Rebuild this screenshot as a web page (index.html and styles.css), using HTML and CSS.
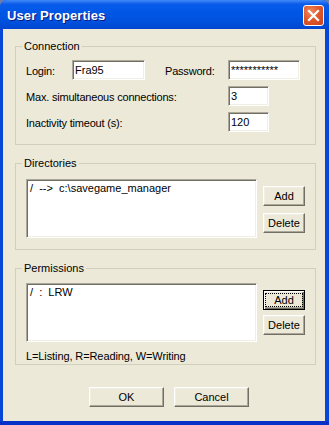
FILE: index.html
```html
<!DOCTYPE html>
<html>
<head>
    <title>User Properties</title>
    <link rel="stylesheet" href="styles.css">
</head>
<body>
    <div class="window">
        <div class="titlebar">
            <span class="title">User Properties</span>
            <button class="close" title="Close">
                <svg width="13" height="13" viewBox="0 0 13 13">
                    <path d="M2 2 L11 11 M11 2 L2 11" stroke="#fff" stroke-width="2.2" stroke-linecap="square"/>
                </svg>
            </button>
        </div>

        <div class="client">
            <fieldset class="group conn">
                <legend>Connection</legend>
                <div class="row">
                    <label class="lbl lbl-login">Login:</label>
                    <input class="edit edit-login" type="text" value="Fra95">
                    <label class="lbl lbl-pass">Password:</label>
                    <input class="edit edit-pass" type="text" value="***********">
                </div>
                <div class="row">
                    <label class="lbl lbl-wide">Max. simultaneous connections:</label>
                    <input class="edit edit-num" type="text" value="3">
                </div>
                <div class="row">
                    <label class="lbl lbl-wide">Inactivity timeout (s):</label>
                    <input class="edit edit-num" type="text" value="120">
                </div>
            </fieldset>

            <fieldset class="group dirs">
                <legend>Directories</legend>
                <div class="listrow">
                    <div class="listbox">
                        <div class="item">/&nbsp; --&gt;&nbsp; c:\savegame_manager</div>
                    </div>
                    <div class="side">
                        <button class="btn">Add</button>
                        <button class="btn">Delete</button>
                    </div>
                </div>
            </fieldset>

            <fieldset class="group perms">
                <legend>Permissions</legend>
                <div class="listrow">
                    <div class="listbox">
                        <div class="item">/&nbsp; :&nbsp; LRW</div>
                    </div>
                    <div class="side">
                        <button class="btn default"><span class="focus">Add</span></button>
                        <button class="btn">Delete</button>
                    </div>
                </div>
                <div class="hint">L=Listing, R=Reading, W=Writing</div>
            </fieldset>

            <div class="footer">
                <button class="btn big">OK</button>
                <button class="btn big">Cancel</button>
            </div>
        </div>
    </div>
</body>
</html>
```

FILE: styles.css
```css
html, body {
    margin: 0;
    padding: 0;
}

body {
    background: #6d7fa8;
    font-family: "Liberation Sans", Arial, sans-serif;
    font-size: 11px;
    color: #000;
}

.window {
    width: 329px;
    height: 425px;
    background: #0846d8;
    border-radius: 7px 7px 0 0;
    display: flex;
    flex-direction: column;
    box-sizing: border-box;
    border-bottom: 4px solid #0831c8;
}

.titlebar {
    height: 29px;
    flex: none;
    display: flex;
    align-items: center;
    justify-content: space-between;
    padding: 0 5px 0 7px;
    border-radius: 7px 7px 0 0;
    background: linear-gradient(to bottom, #3d8cf6 0, #2a73f2 2px, #0a5ceb 4px, #0057e6 40%, #0051dd 75%, #0445d0 100%);
}

.title {
    color: #fff;
    font-weight: bold;
    font-size: 13px;
    letter-spacing: 0.1px;
    text-shadow: 1px 1px 0 #0a1a80;
    margin-top: 1px;
}

.close {
    width: 21px;
    height: 21px;
    padding: 0;
    margin-top: 1px;
    border: 1px solid #fff;
    border-radius: 3px;
    background: radial-gradient(circle at 35% 30%, #f08a60 0, #e05a2c 45%, #c8401c 100%);
    display: flex;
    align-items: center;
    justify-content: center;
}

.client {
    flex: 1;
    margin: 0 4px 0 3px;
    background: #ece9d8;
    padding: 11px 9px 0 12px;
}

.group {
    margin: 0 0 12px 0;
    padding: 7px 10px 12px 10px;
    border: 1px solid #d0d0bf;
    border-radius: 0;
    min-width: 0;
}

.group legend {
    padding: 0 2px;
    margin-left: -4px;
    line-height: 13px;
}

.row {
    display: flex;
    align-items: flex-start;
    height: 20px;
    margin-bottom: 6px;
}

.row:last-child {
    margin-bottom: 0;
}

.lbl {
    padding-top: 5px;
    line-height: 13px;
    letter-spacing: -0.2px;
    flex: none;
}

.lbl-login {
    width: 46px;
}

.lbl-pass {
    width: 63px;
    margin-left: 20px;
}

.lbl-wide {
    width: 202px;
}

.edit {
    box-sizing: border-box;
    height: 20px;
    padding: 0 2px;
    margin: 0;
    font-family: inherit;
    font-size: 11px;
    color: #000;
    background: #fff;
    border: 1px solid;
    border-color: #aca899 #fff #fff #aca899;
    box-shadow: inset 1px 1px 0 #716f64, inset -1px -1px 0 #f1efe2;
    outline: none;
}

.edit-login {
    width: 73px;
}

.edit-pass {
    width: 72px;
}

.edit-num {
    width: 41px;
}

.listrow {
    display: flex;
    align-items: flex-start;
    padding-top: 2px;
}

.listbox {
    box-sizing: border-box;
    width: 234px;
    height: 59px;
    background: #fff;
    border: 1px solid;
    border-color: #aca899 #fff #fff #aca899;
    box-shadow: inset 1px 1px 0 #716f64, inset -1px -1px 0 #f1efe2;
    padding: 2px 3px;
}

.item {
    line-height: 13px;
}

.side {
    display: flex;
    flex-direction: column;
    gap: 7px;
    margin-left: 6px;
    padding-top: 7px;
}

.btn {
    box-sizing: border-box;
    width: 42px;
    height: 20px;
    padding: 0;
    margin: 0;
    font-family: inherit;
    font-size: 11px;
    color: #000;
    background: #ece9d8;
    border: 1px solid;
    border-color: #fff #716f64 #716f64 #fff;
    box-shadow: inset -1px -1px 0 #aca899, inset 1px 1px 0 #f1efe2;
    display: flex;
    align-items: center;
    justify-content: center;
}

.btn.default {
    border: 1px solid #000;
    box-shadow: inset 1px 1px 0 #fff, inset -1px -1px 0 #716f64, inset -2px -2px 0 #aca899;
}

.focus {
    outline: 1px dotted #000;
    outline-offset: 0;
    padding: 0 8px;
    line-height: 12px;
}

.dirs {
    padding-bottom: 11px;
}

.perms {
    padding-bottom: 1px;
}

.perms .listrow {
    padding-top: 1px;
}

.perms .side {
    gap: 5px;
}

.hint {
    margin-top: 8px;
    line-height: 13px;
    letter-spacing: -0.1px;
}

.footer {
    display: flex;
    justify-content: center;
    gap: 10px;
    margin-top: 22px;
    padding-left: 7px;
}

.btn.big {
    width: 75px;
}
```
